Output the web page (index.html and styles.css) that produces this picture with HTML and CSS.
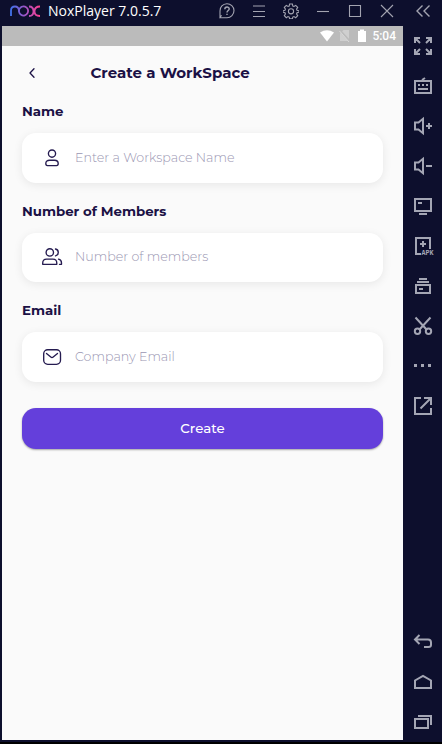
FILE: index.html
```html
<!DOCTYPE html>
<html lang="en">
<head>
<meta charset="utf-8">
<title>NoxPlayer 7.0.5.7</title>
<link rel="stylesheet" href="styles.css">
</head>
<body>
<div class="window">
  <header class="titlebar">
    <svg class="logo" viewBox="0 0 32 14" width="32" height="14">
      <defs><linearGradient id="nox" gradientUnits="userSpaceOnUse" x1="0" y1="0" x2="31" y2="0"><stop offset="0" stop-color="#3576f0"/><stop offset=".5" stop-color="#9a55c8"/><stop offset="1" stop-color="#ff3f92"/></linearGradient></defs>
      <g fill="none" stroke="url(#nox)" stroke-width="1.800"><path d="M2 12V6.500Q2 2.500 6 2.500Q9.500 2.500 10 6.500"/><path d="M11 4a4.600 4.600 0 1 0 5-1.400q-3-.6-5 1.400"/><path d="M20 2.500q4.500 0 4.500 4.700T20 12M31 2.500q-5.500 0-5.500 4.700T31 12"/></g>
    </svg>
    <span class="app-name">NoxPlayer 7.0.5.7</span>
    <nav class="controls">
      <svg class="ctl" viewBox="0 0 16 16"><path d="M1 14.500V8a7 7 0 1 1 7 6.700H1l1.500-2.500"/><path d="M5.800 6.200c0-3 4.400-2.800 4.400-.3C10.200 7.500 8 7.600 8 9.500M8 10.800v1.300" stroke-width="1.400"/></svg>
      <svg class="ctl" viewBox="0 0 16 16"><path d="M2 3h12M2 8.500h12M2 13.500h12"/></svg>
      <svg class="ctl" viewBox="0 0 16 16"><path d="M6.600 1h2.800l.4 2 1.200.5 1.700-1.100 2 2-1.100 1.700.4 1.200 2 .4v1.600l-2 .5-.4 1.200 1.100 1.700-2 2-1.700-1.100-1.200.5-.4 1.700H6.600l-.4-1.700-1.200-.5-1.700 1.100-2-2 1.100-1.700L2 9.800 0 9.300V7.700l2-.4.4-1.200-1.100-1.700 2-2L5 3.500 6.200 3z"/><circle cx="8" cy="8.300" r="2.600"/></svg>
      <svg class="ctl" viewBox="0 0 16 16"><path d="M2 8.500h12"/></svg>
      <svg class="ctl" viewBox="0 0 16 16"><path d="M2.500 2.500h11v11h-11z"/></svg>
      <svg class="ctl" viewBox="0 0 16 16"><path d="M2 2l12 12M14 2L2 14"/></svg>
    </nav>
    <svg class="ctl collapse" viewBox="0 0 16 16"><path d="M7.500 2.500L2 8l5.500 5.500M14.500 2.500L9 8l5.500 5.500" stroke-width="1.400"/></svg>
  </header>

  <div class="body">
    <main class="phone">
      <div class="status">
        <svg width="16" height="14" viewBox="0 0 16 14"><path d="M1 3.500Q8-1 15 3.500L8 12.500z" fill="#fff"/></svg>
        <svg width="12" height="14" viewBox="0 0 12 14"><path d="M4.500 1H10v11H1V4.500z" fill="#cfcfcf"/><path d="M1 1.500l10.500 11.500" stroke="#bbb" stroke-width="2"/><path d="M.5 2l9.500 11" stroke="#d8d8d8"/></svg>
        <svg width="8" height="14" viewBox="0 0 8 14"><path d="M0 2h2V.5h4V2h2v11H0z" fill="#fff"/></svg>
        <span class="time">5:04</span>
      </div>
      <div class="page">
        <div class="head">
          <svg class="back" width="8" height="12" viewBox="0 0 8 12"><path d="M6 1.800L2 6l4 4.200"/></svg>
          <h1>Create a WorkSpace</h1>
        </div>
        <label>Name</label>
        <div class="field">
          <svg class="ico" viewBox="0 0 24 24"><circle cx="12" cy="7.600" r="3.600"/><path d="M5.800 17.600c0-2.300 1.700-3.400 3.700-3.400h5c2 0 3.700 1.100 3.700 3.400 0 1.200-.5 2-1.600 2H7.400c-1.100 0-1.600-.8-1.600-2z"/></svg>
          <span>Enter a Workspace Name</span>
        </div>
        <label>Number of Members</label>
        <div class="field">
          <svg class="ico" viewBox="0 0 24 24"><circle cx="9.800" cy="7.400" r="3.700"/><path d="M2.700 19.300v-1.100c0-2.600 1.500-4 3.900-4h6.300c2.400 0 3.900 1.400 3.900 4v1.100zM15.500 4c3.700.8 3.700 6 0 6.800M18.500 14.200c2 .5 3 1.900 3 3.800v1.300h-2"/></svg>
          <span>Number of members</span>
        </div>
        <label>Email</label>
        <div class="field">
          <svg class="ico" viewBox="0 0 24 24"><rect x="3.700" y="4.700" width="16.800" height="14.600" rx="4"/><path d="M6.500 8.500l4.300 3.600q1.200 1 2.400 0l4.300-3.600"/></svg>
          <span>Company Email</span>
        </div>
        <button class="create">Create</button>
      </div>
    </main>

    <aside class="tools">
      <div class="group">
        <svg viewBox="0 0 24 24"><path d="M4 9V4h5M4 4l5 5M15 4h5v5M20 4l-5 5M4 15v5h5M4 20l5-5M20 15v5h-5M20 20l-5-5"/></svg>
        <svg viewBox="0 0 24 24"><path d="M4 7h16v12H4zM11 6l3-2M7 11h2M11 11h2M15 11h2M7 15h10"/></svg>
        <svg viewBox="0 0 24 24"><path d="M4 8.500h3.500L12 4.800v14.400L7.500 15.500H4zM15 12h6M18 9v6"/></svg>
        <svg viewBox="0 0 24 24"><path d="M4 8.500h3.500L12 4.800v14.400L7.500 15.500H4zM15 12h6"/></svg>
        <svg viewBox="0 0 24 24"><path d="M4 5h16v12H4zM7 9h4M8 20h8"/></svg>
        <svg viewBox="0 0 24 24"><path d="M10 20H5V4h14v11M9 10h6M12 7v6"/><text class="apk" x="10.500" y="21" textLength="12" lengthAdjust="spacingAndGlyphs">APK</text></svg>
        <svg viewBox="0 0 24 24"><path d="M8 5h8M6 8h12M5 11h14v8H5zM8 15h4"/></svg>
        <svg viewBox="0 0 24 24"><path d="M4.500 3.500L16 16M19.500 3.500L8 16"/><circle cx="6.500" cy="17.300" r="2.700"/><circle cx="17.500" cy="17.300" r="2.700"/></svg>
        <svg viewBox="0 0 24 24"><path d="M3 11.500h3M10 11.500h3M17 11.500h3" stroke-width="3"/></svg>
        <svg viewBox="0 0 24 24"><path d="M10 4H4v16h16v-6M13 4h7v7M20 4L9.500 14.500"/></svg>
      </div>
      <div class="group">
        <svg viewBox="0 0 24 24"><path d="M8.500 5L4 9.500 8.500 14M4 9.500h13q3 0 3 3V15q0 2-2.500 2H13"/></svg>
        <svg viewBox="0 0 24 24"><path d="M4 18v-7.500L12 6l8 4.500V18z"/></svg>
        <svg viewBox="0 0 24 24"><path d="M4 9h13v9H4zM7 6h13v9"/></svg>
      </div>
    </aside>
  </div>
  <div class="bottom-edge"></div>
</div>
</body>
</html>
```
FILE: styles.css
```css
* { box-sizing: border-box; }
body { margin: 0; background: #0d0f2d; font-family: Montserrat, Inter, sans-serif; }
.window { display: flex; flex-direction: column; width: 442px; height: 744px; background: #0d0f2d; }

.titlebar { display: flex; align-items: center; height: 26px; padding: 0 11px 5px 9px; }
.logo { flex: none; }
.app-name { width: 170px; margin-left: 7px; color: #fff; font: 14px/20px "Open Sans", sans-serif; white-space: nowrap; }
.controls { display: flex; gap: 16px; margin-left: 1px; }
.ctl { width: 16px; height: 16px; flex: none; fill: none; stroke: #a3a4b1; stroke-width: 1.1; }
.collapse { margin-left: 20px; }

.body { display: flex; height: 714px; padding-left: 2px; }
.phone { width: 401px; background: #fafafa; }
.status { display: flex; align-items: center; justify-content: flex-end; height: 20px; padding-right: 7px; background: #bbb; }
.status svg:nth-child(2) { margin-left: 4px; }
.status svg:nth-child(3) { margin-left: 7px; }
.time { margin-left: 6px; color: #fff; font: 500 12px/20px Roboto, sans-serif; }

.page { display: flex; flex-direction: column; padding: 0 20px; color: #1b1145; }
.head { display: flex; align-items: center; height: 54px; padding-left: 6px; }
.back { fill: none; stroke: #1b1145; stroke-width: 1.3; stroke-linecap: round; stroke-linejoin: round; }
h1 { margin: 0 0 0 54.500px; font-size: 15px; line-height: 20px; font-weight: 700; white-space: nowrap; }
label { height: 22px; margin-bottom: 11px; font-size: 13.350px; line-height: 22px; font-weight: 700; }
.field { display: flex; align-items: center; height: 49.500px; margin-bottom: 17px; padding-left: 18px; border-radius: 14px; background: #fff; box-shadow: 0 2px 10px rgba(0, 0, 0, .08); }
.ico { width: 24px; height: 24px; flex: none; fill: none; stroke: #251b50; stroke-width: 1.350; stroke-linejoin: round; stroke-linecap: round; }
.field span { margin-left: 11px; color: #9a96b2; font-size: 12.650px; font-weight: 300; line-height: 18px; white-space: nowrap; }
.create { height: 40.500px; margin-top: 9.500px; padding: 0; border: 0; border-radius: 14px; background: #643fdb; color: #fff; font: 500 13.400px/40px Montserrat, Inter, sans-serif; box-shadow: 0 1px 2px rgba(0, 0, 0, .35); }

.tools { display: flex; flex-direction: column; justify-content: space-between; width: 39px; }
.tools .group { display: flex; flex-direction: column; gap: 16px; padding: 8px 0 0 8px; }
.tools .group:last-child { padding-bottom: 6px; }
.tools svg { display: block; width: 24px; height: 24px; fill: none; stroke: #a4a6b4; stroke-width: 2; }
.tools .apk { fill: #a4a6b4; stroke: none; font: 700 7px "Liberation Mono", monospace; }
.bottom-edge { height: 4px; border-bottom: 2px solid #000; }
```
